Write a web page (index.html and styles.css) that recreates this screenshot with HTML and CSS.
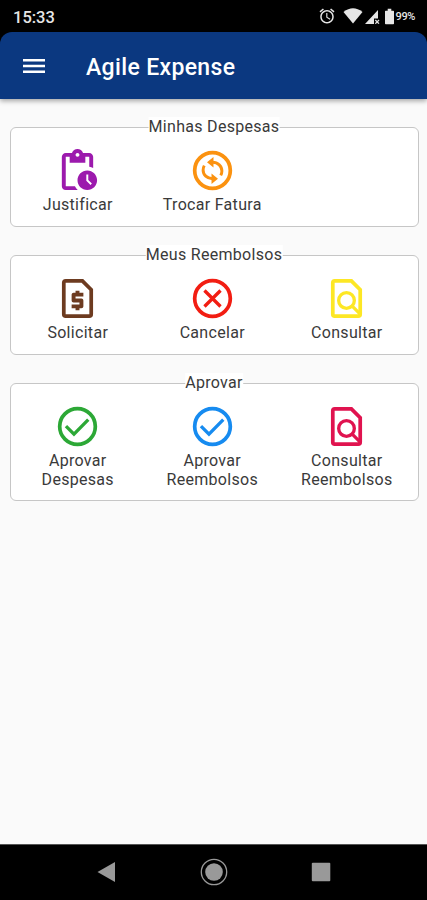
FILE: index.html
```
<!DOCTYPE html>
<html lang="pt-BR">

<head>
    <meta charset="UTF-8">
    <meta name="viewport" content="width=device-width, initial-scale=1.0">
    <title>Agile Expense</title>
    <link rel="stylesheet" href="styles.css">
</head>

<body>
    <div class="status">
        <span class="time">15:33</span>
        <div class="status-icons">
            <svg class="alarm" viewBox="0 0 24 24"><path d="M22 5.72l-4.6-3.86-1.29 1.53 4.6 3.86L22 5.72zM7.88 3.39L6.6 1.86 2 5.71l1.29 1.53 4.59-3.85zM12.5 8H11v6l4.75 2.85.75-1.23-4-2.37V8zM12 4c-4.97 0-9 4.03-9 9s4.02 9 9 9c4.97 0 9-4.03 9-9s-4.03-9-9-9zm0 16c-3.87 0-7-3.13-7-7s3.13-7 7-7 7 3.13 7 7-3.13 7-7 7z"/></svg>
            <svg class="wifi" viewBox="0 0 20 16"><path d="M0.5 4Q10-3.5 19.500 4L10 15.500z"/></svg>
            <svg class="signal" viewBox="0 0 15 15"><path d="M0 15L13 1v8.500H9V15z"/><path d="M10.300 11l3.700 3.700M14 11l-3.700 3.700" stroke="#ddd" stroke-width="1.300"/></svg>
            <svg class="battery" viewBox="0 0 10 17"><path d="M3 0h4v2h2.200q.8 0 .8.800v13.400q0 .8-.8.800H.800q-.8 0-.8-.8V2.800Q0 2 .8 2H3z"/></svg>
            <span class="percent">99%</span>
        </div>
    </div>

    <header class="topbar">
        <svg class="menu" viewBox="0 0 24 16"><path d="M1 1h22v2.500H1zM1 6.700h22v2.500H1zM1 12.400h22v2.500H1z"/></svg>
        <h1>Agile Expense</h1>
    </header>

    <main class="content">
        <section class="group">
            <h2>Minhas Despesas</h2>
            <div class="item purple">
                <svg viewBox="0 0 24 24"><path d="M17 12c-2.760 0-5 2.240-5 5s2.240 5 5 5 5-2.240 5-5-2.240-5-5-5zm1.650 7.350L16.500 17.200V14h1v2.790l1.850 1.850-.7.710zM18 3h-3.180C14.400 1.840 13.300 1 12 1s-2.400.84-2.820 2H6c-1.100 0-2 .9-2 2v15c0 1.100.9 2 2 2h6.110c-.59-.57-1.070-1.250-1.420-2H6V5h2v3h8V5h2v5.080c.71.100 1.380.310 2 .6V5c0-1.100-.9-2-2-2zm-6 2c-.55 0-1-.45-1-1s.45-1 1-1 1 .45 1 1-.45 1-1 1z"/></svg>
                <span>Justificar</span>
            </div>
            <div class="item orange">
                <svg viewBox="0 0 24 24"><circle class="ring" cx="12" cy="12" r="9.100"/><path class="arc" d="M12 7.800c2.800 0 4.800 2 4.800 4.500 0 .8-.2 1.500-.6 2.200M7.800 9.500c-.4.700-.6 1.400-.6 2.200 0 2.500 2 4.500 4.800 4.500"/><path d="M9.200 7.800l3.300-2.700v5.400zM14.800 16.200l-3.300-2.700v5.400z"/></svg>
                <span>Trocar Fatura</span>
            </div>
        </section>

        <section class="group">
            <h2>Meus Reembolsos</h2>
            <div class="item brown">
                <svg viewBox="0 0 24 24"><path class="sheet" d="M14.500 3H6Q5 3 5 4v16q0 1 1 1h12q1 0 1-1V7.500z"/><path d="M11 17v1h2v-1h1c.550 0 1-.45 1-1v-3c0-.55-.45-1-1-1h-3v-1h4V9h-2V8h-2v1h-1c-.55 0-1 .45-1 1v3c0 .55.450 1 1 1h3v1H9v2z"/></svg>
                <span>Solicitar</span>
            </div>
            <div class="item red">
                <svg viewBox="0 0 24 24"><circle class="ring" cx="12" cy="12" r="9.100"/><path class="line" d="M7.900 7.900l8.200 8.200M16.100 7.900l-8.200 8.200"/></svg>
                <span>Cancelar</span>
            </div>
            <div class="item yellow">
                <svg viewBox="0 0 24 24"><path class="sheet" d="M14.500 3H6Q5 3 5 4v16q0 1 1 1h12q1 0 1-1V7.500z"/><circle class="line" cx="12" cy="13" r="4"/><path class="line" d="M14.800 15.800l4.200 4.200"/></svg>
                <span>Consultar</span>
            </div>
        </section>

        <section class="group">
            <h2>Aprovar</h2>
            <div class="item green">
                <svg viewBox="0 0 24 24"><circle class="ring" cx="12" cy="12" r="9.100"/><path class="line" d="M6.100 11.800l4.100 4.100 7.300-7.400"/></svg>
                <span>Aprovar<br>Despesas</span>
            </div>
            <div class="item blue">
                <svg viewBox="0 0 24 24"><circle class="ring" cx="12" cy="12" r="9.100"/><path class="line" d="M6.100 11.800l4.100 4.100 7.300-7.400"/></svg>
                <span>Aprovar<br>Reembolsos</span>
            </div>
            <div class="item pink">
                <svg viewBox="0 0 24 24"><path class="sheet" d="M14.500 3H6Q5 3 5 4v16q0 1 1 1h12q1 0 1-1V7.500z"/><circle class="line" cx="12" cy="13" r="4"/><path class="line" d="M14.800 15.800l4.200 4.200"/></svg>
                <span>Consultar<br>Reembolsos</span>
            </div>
        </section>
    </main>

    <nav class="navbar">
        <svg viewBox="0 0 28 28"><path d="M4.500 14L22 4v20z"/></svg>
        <svg viewBox="0 0 28 28"><circle cx="14" cy="14" r="8.800"/><circle cx="14" cy="14" r="12.700" fill="none" stroke="#999" stroke-width="1.300"/></svg>
        <svg viewBox="0 0 28 28"><rect x="4.800" y="4.700" width="18.500" height="18.500" rx="1"/></svg>
    </nav>
</body>

</html>
```
FILE: styles.css
```
* {
    box-sizing: border-box;
}

html,
body {
    height: 100%;
    margin: 0;
}

body {
    display: flex;
    flex-direction: column;
    background-color: #000;
    color: #3a3a3a;
    font-family: Roboto, "Liberation Sans", sans-serif;
    overflow: hidden;
}

svg {
    display: block;
    flex: none;
}

/* 状态栏 */
.status {
    display: flex;
    justify-content: space-between;
    height: 32px;
    padding: 2px 12px 0 13px;
    align-items: center;
    color: #e6e6e6;
}

.time {
    padding-top: 1px;
    font-size: 16.500px;
    font-weight: 500;
    line-height: 30px;
}

.status-icons {
    display: flex;
    align-items: center;
    padding-bottom: 2px;
    fill: #e6e6e6;
}

.alarm {
    width: 18px;
    height: 18px;
    margin-right: 7px;
}

.wifi {
    width: 20px;
    height: 16px;
    margin-right: 2px;
}

.signal {
    width: 15px;
    height: 15px;
    margin-right: 5px;
}

.battery {
    width: 9px;
    height: 17px;
    margin-right: 2px;
}

.percent {
    font-size: 11px;
    font-weight: 500;
    letter-spacing: -.4px;
}

/* 顶部标题 */
.topbar {
    display: flex;
    align-items: center;
    height: 66.500px;
    padding: 1px 22px 0;
    background-color: #0b3880;
    border-radius: 12px 12px 0 0;
    box-shadow: 0 2px 5px rgba(0, 0, 0, .35);
    flex: none;
    z-index: 1;
}

.menu {
    width: 24px;
    height: 16px;
    fill: #fff;
}

.topbar h1 {
    margin: 3px 0 0 40px;
    color: #fff;
    font-size: 23px;
    font-weight: 500;
    letter-spacing: .35px;
}

.content {
    flex: 1;
    padding: 28.500px 8.500px 0 9.500px;
    background-color: #fafafa;
}

.group {
    display: grid;
    grid-template-columns: repeat(3, 134.500px);
    position: relative;
    min-height: 100px;
    margin-bottom: 28px;
    padding: 19px 0 11px;
    border: 1px solid #c6c6c6;
    border-radius: 6px;
    background-color: #fff;
}

/* 标题压在边框上 */
.group h2 {
    position: absolute;
    top: -11px;
    left: 50%;
    transform: translateX(-50%);
    margin: 0;
    background-color: #fff;
    font-size: 16px;
    font-weight: 400;
    line-height: 20px;
    letter-spacing: .3px;
    white-space: nowrap;
}

.item {
    display: flex;
    flex-direction: column;
    align-items: center;
    text-align: center;
    font-size: 16px;
    line-height: 19px;
    letter-spacing: .3px;
}

.item svg {
    width: 47px;
    height: 47px;
    margin-bottom: 1px;
    fill: currentColor;
}

.item span {
    color: #3a3a3a;
}

.item .ring,
.item .line,
.item .arc,
.item .sheet {
    fill: none;
    stroke: currentColor;
    stroke-width: 1.900;
}

.item .line {
    stroke-width: 1.700;
}

.item .arc {
    stroke-width: 1.500;
}

.purple { color: #9c1aad; }
.orange { color: #fb9210; }
.brown { color: #6d3b20; }
.red { color: #f21d12; }
.yellow { color: #fde725; }
.green { color: #2ca836; }
.blue { color: #168bf0; }
.pink { color: #e0134f; }

/* 底部导航 */
.navbar {
    display: flex;
    gap: 79px;
    justify-content: center;
    align-items: center;
    height: 56px;
    padding-bottom: 2px;
    background-color: #000;
    border-top: 1px solid #555;
    fill: #999;
    flex: none;
}

.navbar svg {
    width: 28px;
    height: 28px;
}
```
